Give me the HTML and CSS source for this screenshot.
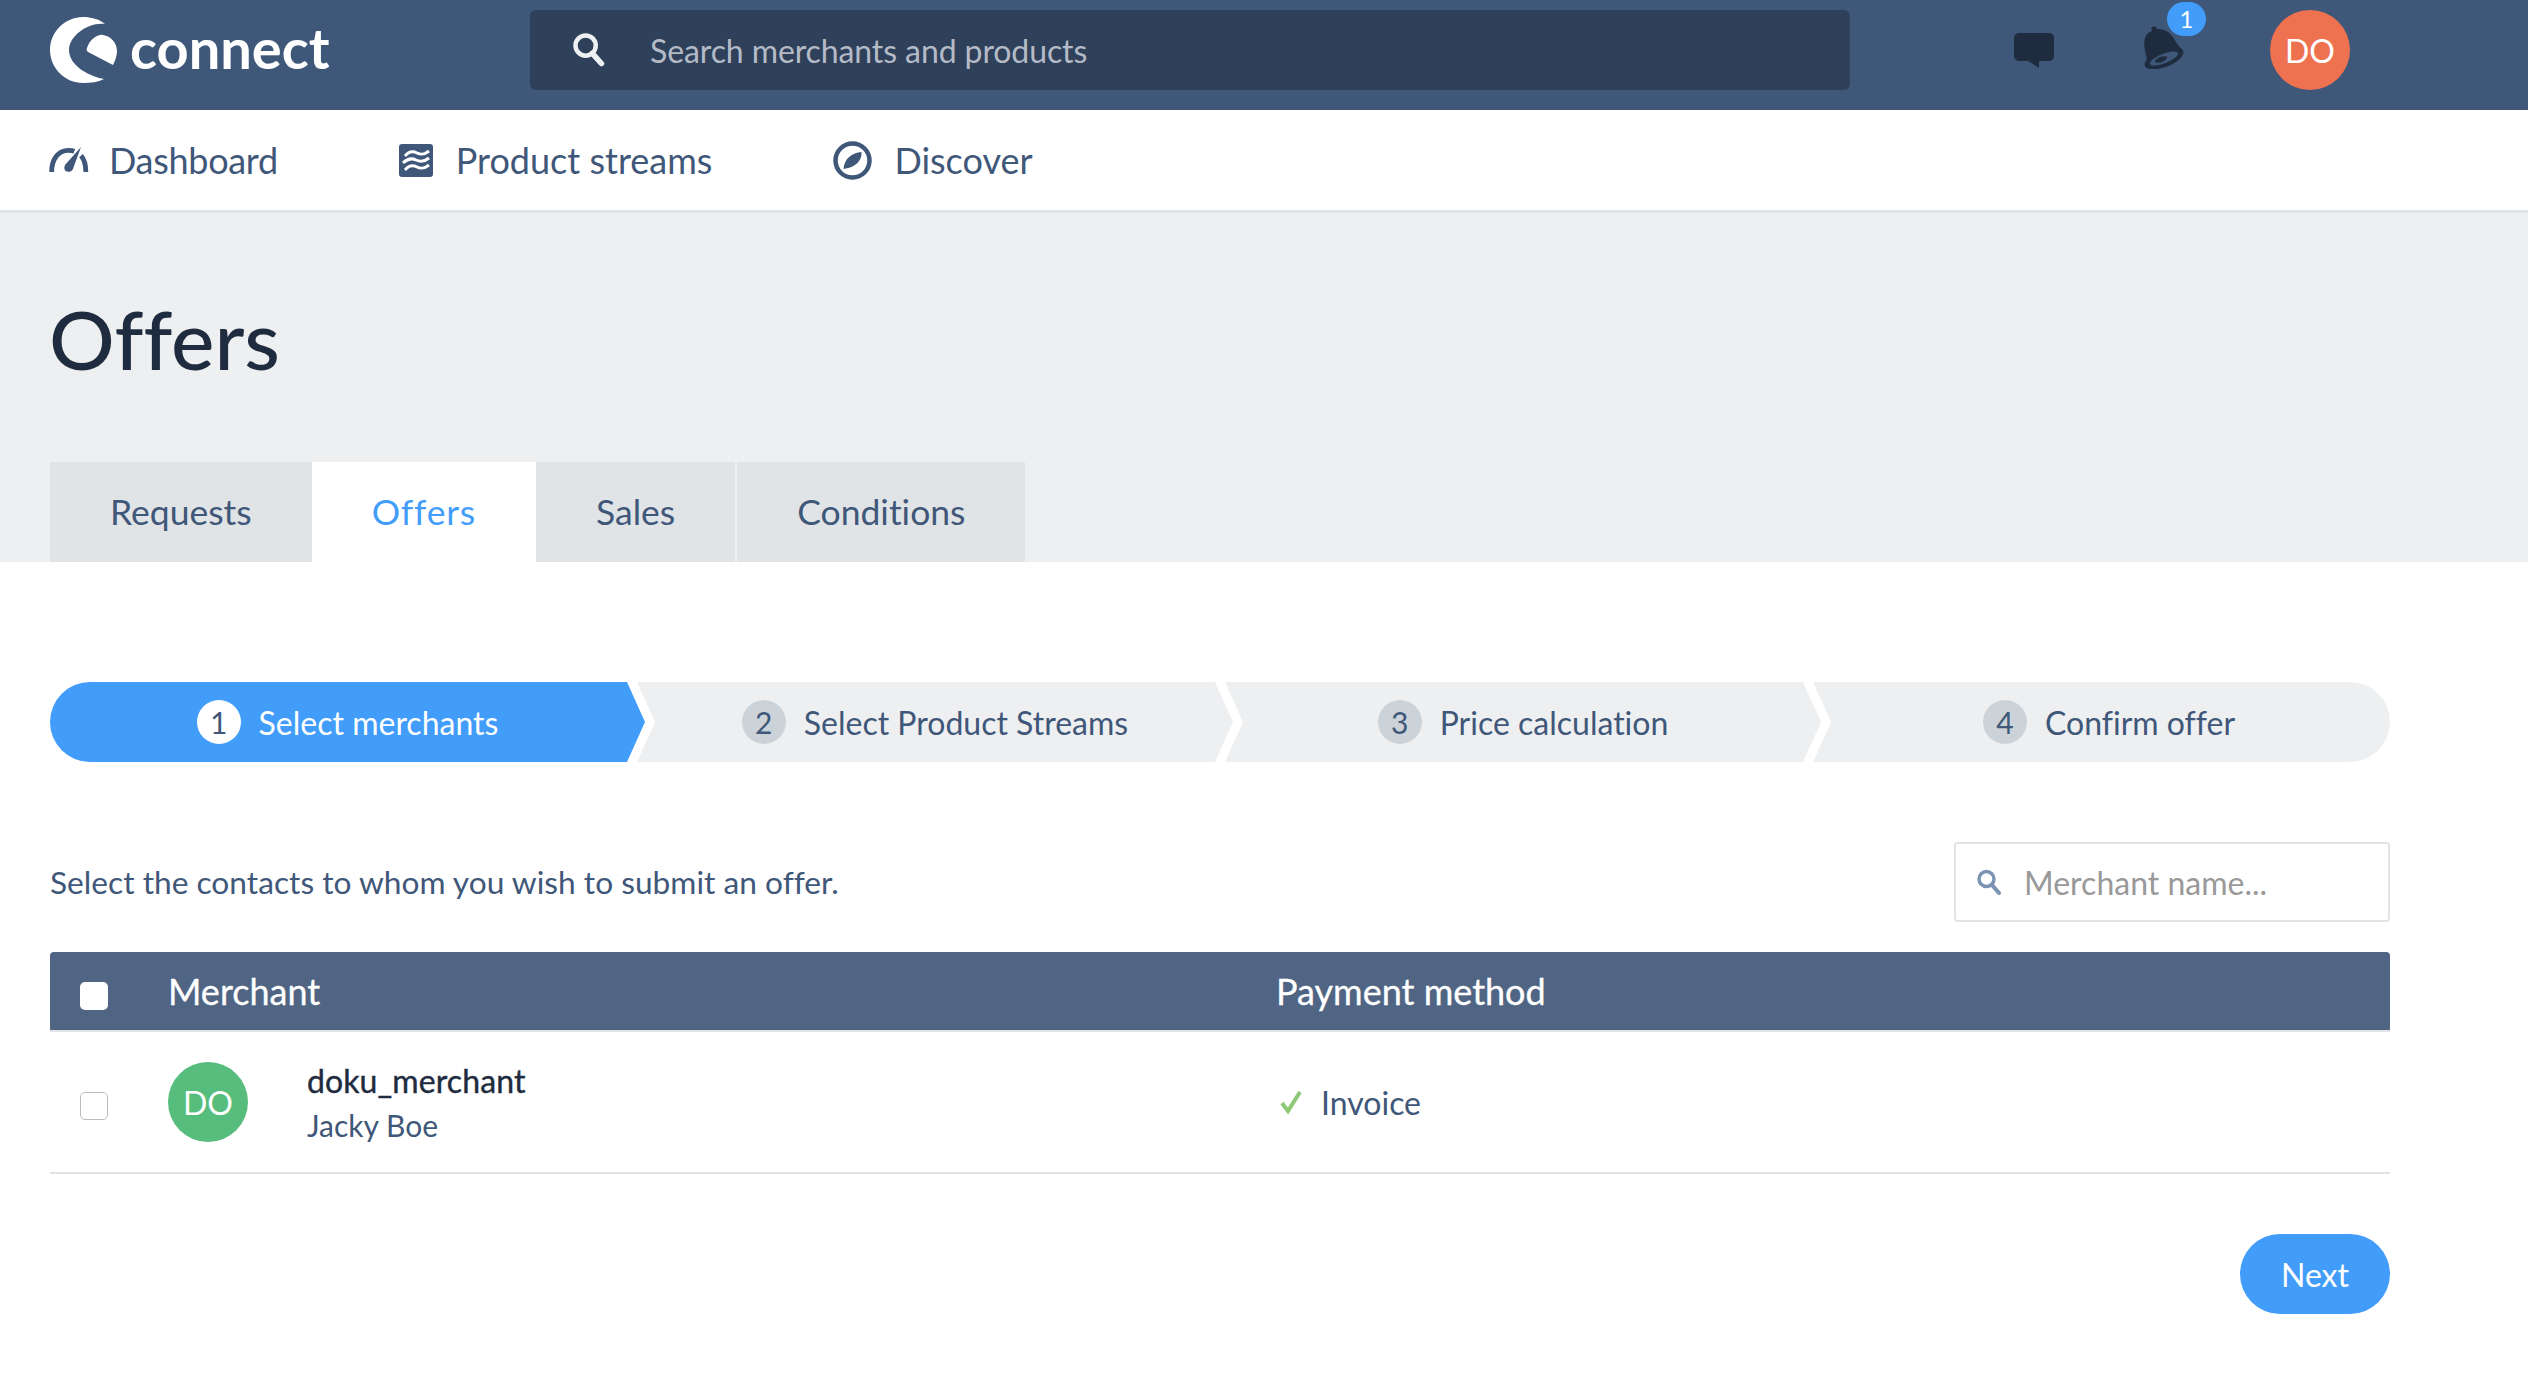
FILE: index.html
```html
<!DOCTYPE html>
<html lang="en">
<head>
  <meta charset="UTF-8">
  <meta name="viewport" content="width=device-width, initial-scale=1.0">
  <title>Offers</title>
  <link rel="stylesheet" href="styles.css">
</head>

<body>
  <header class="topbar">
    <a class="brand">
      <svg class="brand-mark" viewBox="0 0 67 66" width="67" height="66">
        <path fill="#fff" d="M55 7C49 2 41 0 33 0 15 0 0 15 0 33s15 33 33 33c8 0 15-1 21-4C42 60 19 50 19 33 19 19 38 5 55 7Z"/>
        <path fill="#fff" d="M37 31C40 22 48 17 53 18c8 1 14 8 14 16 0 5-2 10-4 14L40 36c-3-1-4-3-3-5Z"/>
      </svg>
      <span class="brand-name">connect</span>
    </a>
    <div class="global-search">
      <svg class="global-search-icon" viewBox="0 0 32 32" width="36" height="36">
        <circle cx="13" cy="12" r="9" fill="none" stroke="#eef0f2" stroke-width="4"/>
        <path d="M19 19l8 9" stroke="#eef0f2" stroke-width="5" stroke-linecap="round"/>
      </svg>
      <span class="global-search-text">Search merchants and products</span>
    </div>
    <div class="topbar-actions">
      <svg class="icon-chat" viewBox="0 0 40 35" width="40" height="35">
        <path fill="#1f2b3e" d="M5 0h30a5 5 0 0 1 5 5v18a5 5 0 0 1-5 5H25v7l-11-7H5a5 5 0 0 1-5-5V5a5 5 0 0 1 5-5Z"/>
      </svg>
      <div class="bell">
        <svg viewBox="0 0 40 43" width="40" height="43">
          <path fill="#1f2b3e" d="M8 1c2-1.500 5 0 5 2 6 0 12 2 16 8 3 5 5 9 10 13L3 38c.5-6-2-11-2.500-17C-.5 13 2 7 8 5 7.500 3 7 2 8 1Z"/>
          <ellipse cx="20" cy="32.500" rx="20.500" ry="8.500" transform="rotate(-21 20 32.500)" fill="#1f2b3e"/>
          <ellipse cx="20" cy="32.500" rx="15" ry="4.800" transform="rotate(-21 20 32.500)" fill="#3f5779"/>
          <ellipse cx="17" cy="33.500" rx="6.500" ry="2.600" transform="rotate(-21 17 33.500)" fill="#1f2b3e"/>
        </svg>
        <span class="bell-badge">1</span>
      </div>
      <div class="avatar avatar-orange">DO</div>
    </div>
  </header>

  <nav class="mainnav">
    <a class="mainnav-item mainnav-dashboard">
      <svg viewBox="0 0 42 27" width="41" height="26">
        <path d="M3.500 26C3.500 13 10 3.500 21 3.500c2 0 4 .2 6 1M34 9c3.500 4 5 10 5 17" fill="none" stroke="#3f5779" stroke-width="5"/>
        <path d="M34 0l-8.500 23c-1.500 3-5.500 3.500-7.500 2-2-2-1.500-5 0-7Z" fill="#3f5779"/>
      </svg>
      <span>Dashboard</span>
    </a>
    <a class="mainnav-item">
      <svg viewBox="0 0 35 35" width="35" height="35">
        <rect y="1" width="34" height="33" rx="3" fill="#3f5779"/>
        <path d="M6 13c4-5 8-5 12-3s7 2 12-2M4 20c5-5 9-5 13-3s8 2 13-2M6 27c4-5 8-5 12-3s7 2 12-2" fill="none" stroke="#fff" stroke-width="3"/>
      </svg>
      <span>Product streams</span>
    </a>
    <a class="mainnav-item">
      <svg viewBox="0 0 39 39" width="39" height="39">
        <circle cx="19.500" cy="19.500" r="17" fill="none" stroke="#3f5779" stroke-width="4.500"/>
        <path d="M28.500 11c.5 8-4.500 15-18 17 .5-10 8.500-16.500 18-17Z" fill="#3f5779"/>
      </svg>
      <span>Discover</span>
    </a>
  </nav>

  <section class="hero">
    <h1 class="hero-title">Offers</h1>
    <div class="tabs">
      <a class="tab">Requests</a>
      <a class="tab tab-active">Offers</a>
      <a class="tab">Sales</a>
      <a class="tab">Conditions</a>
    </div>
  </section>

  <main class="content">
    <ol class="steps">
      <li class="step step-first step-active"><b class="step-num">1</b><span>Select merchants</span></li>
      <li class="step"><b class="step-num">2</b><span>Select Product Streams</span></li>
      <li class="step"><b class="step-num">3</b><span>Price calculation</span></li>
      <li class="step step-last"><b class="step-num">4</b><span>Confirm offer</span></li>
    </ol>

    <div class="intro">
      <p>Select the contacts to whom you wish to submit an offer.</p>
      <div class="filter">
        <svg viewBox="0 0 26 26" width="26" height="26">
          <circle cx="10.500" cy="10" r="7.500" fill="none" stroke="#7b93b3" stroke-width="3.400"/>
          <path d="M16 16l7 8" stroke="#7b93b3" stroke-width="4" stroke-linecap="round"/>
        </svg>
        <span>Merchant name...</span>
      </div>
    </div>

    <div class="table">
      <div class="table-head">
        <div class="cell-check"><span class="check check-head"></span></div>
        <div class="cell-merchant">Merchant</div>
        <div class="cell-payment">Payment method</div>
      </div>
      <div class="table-row">
        <div class="cell-check"><span class="check check-row"></span></div>
        <div class="cell-merchant merchant">
          <div class="avatar avatar-green">DO</div>
          <div>
            <div class="merchant-name">doku_merchant</div>
            <div class="merchant-contact">Jacky Boe</div>
          </div>
        </div>
        <div class="cell-payment payment">
          <svg viewBox="0 0 22 24" width="22" height="24">
            <path d="M2 13l6 8L20 2" fill="none" stroke="#8dc875" stroke-width="4"/>
          </svg>
          <span>Invoice</span>
        </div>
      </div>
    </div>

    <div class="actions">
      <button class="btn-next" type="button">Next</button>
    </div>
  </main>
</body>
</html>
```

FILE: styles.css
```css
* {
  box-sizing: border-box;
}
body {
  margin: 0;
  background-color: #fff;
  color: #3f5779;
  font-family: Lato, "Open Sans", sans-serif;
  font-size: 32px;
  font-variant-ligatures: none;
}
.topbar {
  height: 110px;
  display: flex;
  align-items: center;
  background-color: #3f5779;
  padding: 0 178px 10px 50px;
}
.brand {
  width: 480px;
  display: flex;
  align-items: center;
  gap: 13px;
}
.brand-name {
  color: #fff;
  font-size: 56px;
  font-weight: 700;
  line-height: 1;
  margin-top: -4px;
}
.global-search {
  width: 1320px;
  height: 80px;
  display: flex;
  align-items: center;
  gap: 43px;
  padding-left: 41px;
  background-color: #2f405a;
  border-radius: 6px;
}
.global-search-text {
  color: #b4bbc6;
  font-size: 32px;
  letter-spacing: -0.1px;
}
.topbar-actions {
  margin-left: auto;
  display: flex;
  align-items: center;
}
.icon-chat {
  margin-right: 90px;
}
.bell {
  position: relative;
  height: 43px;
  margin-right: 86px;
  margin-top: -5px;
}
.bell-badge {
  position: absolute;
  left: 23px;
  top: -24px;
  width: 39px;
  height: 34px;
  border-radius: 17px;
  background-color: #429dfa;
  color: #fff;
  font-size: 24px;
  line-height: 34px;
  text-align: center;
}
.avatar {
  width: 80px;
  height: 80px;
  border-radius: 50%;
  flex: none;
  display: flex;
  align-items: center;
  justify-content: center;
  color: #fff;
  font-size: 32px;
}
.avatar-orange {
  background-color: #ee7150;
}
.avatar-green {
  background-color: #56bd7c;
}
.mainnav {
  height: 103px;
  display: flex;
  align-items: center;
  padding-left: 48px;
  background-color: #fff;
  border-bottom: 3px solid #e1e4e6;
}
.mainnav-item {
  display: flex;
  align-items: center;
  gap: 22px;
  margin-right: 121px;
  font-size: 36px;
}
.mainnav-dashboard {
  gap: 20px;
}
.mainnav-dashboard span {
  letter-spacing: -0.3px;
}
.hero {
  height: 349px;
  padding: 0 0 0 50px;
  display: flex;
  flex-direction: column;
  justify-content: flex-end;
  background-color: #eeeff1;
}
.hero-title {
  margin: 0 0 79px -1px;
  color: #1f2b3e;
  font-size: 82px;
  font-weight: 500;
  line-height: 90px;
}
.tabs {
  display: flex;
  height: 100px;
}
.tab {
  display: flex;
  align-items: center;
  padding: 0 60px 2px;
  background-color: #e1e4e6;
  font-size: 35.5px;
}
.tab + .tab {
  border-left: 2px solid #eeeff1;
}
.tab-active {
  background-color: #fff;
  color: #429dfa;
  letter-spacing: 0.8px;
}
.tab + .tab-active,
.tab-active + .tab {
  border-left: 0;
}
.content {
  padding: 120px 138px 0 50px;
}
.steps {
  display: flex;
  list-style: none;
  margin: 0;
  padding: 0;
}
.step {
  width: 596px;
  height: 80px;
  display: flex;
  align-items: center;
  justify-content: center;
  gap: 18px;
  background-color: #eeeff1;
  clip-path: polygon(0 0, calc(100% - 18px) 0, 100% 50%, calc(100% - 18px) 100%, 0 100%, 18px 50%);
}
.step + .step {
  margin-left: -8px;
}
.step-first {
  width: 595px;
  border-radius: 40px 0 0 40px;
  clip-path: polygon(0 0, calc(100% - 18px) 0, 100% 50%, calc(100% - 18px) 100%, 0 100%);
}
.step-last {
  width: 577px;
  padding-left: 15px;
  border-radius: 0 40px 40px 0;
  clip-path: polygon(0 0, 100% 0, 100% 100%, 0 100%, 18px 50%);
}
.step-active {
  background-color: #429dfa;
  color: #fff;
}
.step-num {
  width: 44px;
  height: 44px;
  border-radius: 50%;
  display: flex;
  align-items: center;
  justify-content: center;
  background-color: #ccd3d8;
  font-size: 30px;
  font-weight: 400;
}
.step-active .step-num {
  background-color: #fff;
  color: #3f5779;
}
.intro {
  display: flex;
  align-items: center;
  justify-content: space-between;
  margin-top: 80px;
}
.intro p {
  margin: 0;
  font-size: 31.7px;
}
.filter {
  width: 436px;
  height: 80px;
  display: flex;
  align-items: center;
  gap: 22px;
  padding-left: 20px;
  border: 2px solid #e1e4e6;
  border-radius: 4px;
  color: #999;
}
.table {
  margin-top: 30px;
}
.table-head {
  height: 80px;
  display: flex;
  align-items: center;
  background-color: #506584;
  border-bottom: 2px solid #e1e4e6;
  border-radius: 4px 4px 0 0;
  color: #fff;
  font-size: 36px;
  -webkit-text-stroke: 0.3px #fff;
}
.table-row {
  height: 142px;
  display: flex;
  align-items: center;
  border-bottom: 2px solid #e1e4e6;
}
.cell-check {
  width: 118px;
  padding-left: 30px;
  display: flex;
}
.cell-merchant {
  width: 1108px;
}
.check {
  width: 28px;
  height: 28px;
  background-color: #fff;
  border: 1px solid #bbb;
  border-radius: 5px;
}
.check-head {
  border: 0;
  margin-top: 10px;
}
.check-row {
  margin-top: 8px;
}
.merchant {
  display: flex;
  align-items: center;
  gap: 59px;
}
.merchant-name {
  color: #1f2b3e;
  letter-spacing: 0.1px;
  -webkit-text-stroke: 0.4px #1f2b3e;
}
.merchant-contact {
  margin-top: 7px;
  font-size: 30px;
}
.payment {
  display: flex;
  align-items: center;
  gap: 19px;
  padding-left: 4px;
}
.actions {
  display: flex;
  justify-content: flex-end;
  margin-top: 60px;
}
.btn-next {
  width: 150px;
  height: 80px;
  border: 0;
  border-radius: 40px;
  background-color: #429dfa;
  color: #fff;
  font-family: inherit;
  font-size: 32px;
}
```
